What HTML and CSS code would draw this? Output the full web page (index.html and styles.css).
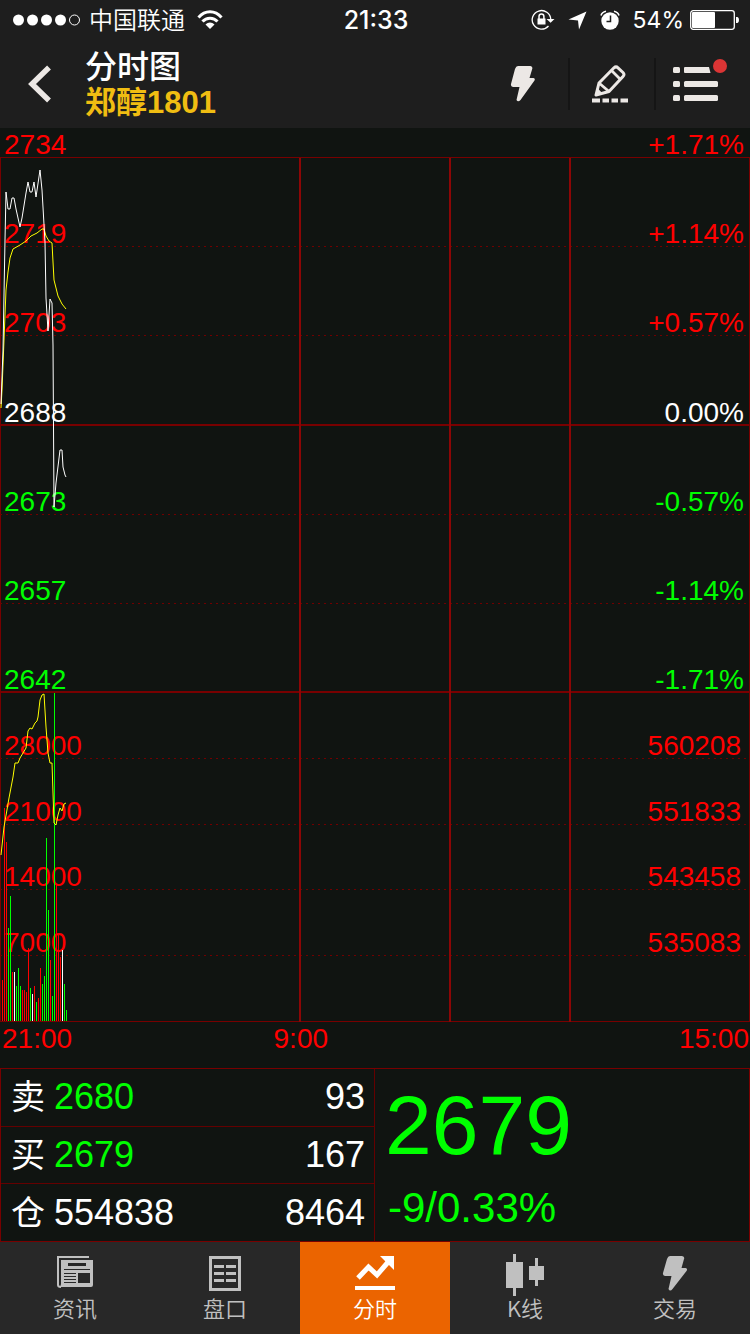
FILE: index.html
```html
<!DOCTYPE html>
<html lang="zh-CN">
<head>
  <meta charset="utf-8">
  <meta name="viewport" content="width=device-width, initial-scale=1">
  <title>分时图</title>
  <link rel="stylesheet" href="styles.css">
</head>
<body>
  <div class="app">
    <div class="status-bar">
      <div class="status-left">
        <svg width="68" height="12" viewBox="0 0 68 12" fill="#fff">
          <circle cx="5.5" cy="6" r="5.5"/><circle cx="19.5" cy="6" r="5.5"/><circle cx="33.5" cy="6" r="5.5"/><circle cx="47.5" cy="6" r="5.5"/>
          <circle cx="61.5" cy="6" r="5" fill="none" stroke="#fff"/>
        </svg>
        <span class="carrier">中国联通</span>
        <svg class="wifi" width="26" height="20" viewBox="0 0 26 20" fill="none" stroke="#fff" stroke-width="3">
          <path d="M1.500 7.500C8-.1 18-.1 24.500 7.500"/>
          <path d="M5.500 11.500C9.500 7 16.500 7 20.500 11.500"/>
          <path d="M13 19L8.500 14.500C11 11.800 15 11.800 17.500 14.500Z" fill="#fff" stroke="none"/>
        </svg>
      </div>
      <div class="clock">21:33</div>
      <div class="status-right">
        <svg width="24" height="22" viewBox="0 0 24 22" fill="none" stroke="#fff" stroke-width="1.300">
          <path d="M17.500 17A9.300 9.300 0 1 1 19.800 10.500"/>
          <path d="M15.500 10H23.500L19.600 13.800Z" fill="#fff" stroke="none"/>
          <path d="M6.500 9.500H14.500V15.500H6.500Z" fill="#fff" stroke="none"/>
          <path d="M8 10V7.500A2.400 2.400 0 0 1 12.900 7.500V10" stroke-width="1.500"/>
        </svg>
        <svg width="19" height="19" viewBox="0 0 19 19" fill="#fff"><path d="M18.500.5L11 18.500L10 9.500L.5 8.500Z"/></svg>
        <svg width="20" height="20" viewBox="0 0 20 20">
          <circle cx="10" cy="11" r="8.700" fill="#fff"/>
          <path d="M1 5.500Q2 2 6 1.200M19 5.500Q18 2 14 1.200" fill="none" stroke="#fff" stroke-width="1.600"/>
          <path d="M10.500 5.500V11.500H6.500" fill="none" stroke="#1e1e1e" stroke-width="1.500"/>
        </svg>
        <span class="battery-text">54%</span>
        <svg width="49" height="20" viewBox="0 0 49 20">
          <rect x=".7" y=".7" width="43.600" height="18.600" rx="2.500" fill="none" stroke="#fff" stroke-width="1.300"/>
          <rect x="2" y="2" width="23" height="16" rx="1" fill="#fff"/>
          <path d="M46 7H47.500Q49 7.500 49 10T47.500 13H46Z" fill="#fff"/>
        </svg>
      </div>
    </div>

    <header class="nav">
      <button class="back" aria-label="返回">
        <svg width="24" height="38" viewBox="0 0 24 38" fill="none" stroke="#ece8e5" stroke-width="5.500"><path d="M21 2.500L4 19L21 35.500"/></svg>
      </button>
      <div class="titles">
        <h1>分时图</h1>
        <div class="contract">郑醇1801</div>
      </div>
      <div class="nav-actions">
        <button class="action" aria-label="闪电下单">
          <svg width="26" height="36" viewBox="0 0 26 36" fill="#ece8e5"><path d="M8 0H20.500Q23 .5 22.200 3L19.500 12H23.500Q25.500 12.500 24.500 14.500L10.500 34Q8 36.500 6.500 34L9.500 21H3Q.5 20.500 1 18L5 3Q6 0 8 0Z"/></svg>
        </button>
        <button class="action" aria-label="画线">
          <svg width="38" height="38" viewBox="0 0 38 38" fill="none" stroke="#ece8e5" stroke-width="3" stroke-linejoin="round">
            <path d="M5 30L8 18L23 2.800Q25 1 27 2.800L32 7.500Q34 9.500 32 11.500L18 26.500Z"/>
            <path d="M8 18L18 26.500M20.500 5.500L29.500 14.500" stroke-width="2.800"/>
            <path d="M5 30L6.500 23L11.500 28.500Z" fill="#ece8e5" stroke="none"/>
            <path d="M1 35.500H9M11.500 35.500H18M20.500 35.500H27M29.500 35.500H37" stroke-width="4" stroke-linejoin="miter"/>
          </svg>
        </button>
        <button class="action" aria-label="菜单">
          <svg width="46" height="36" viewBox="0 0 46 36" fill="#ece8e5">
            <rect y="1" width="7" height="6" rx="1.500"/><path d="M12 1H36L37.500 7H12Q11 7 11 6V2Q11 1 12 1Z"/>
            <rect y="15" width="7" height="6" rx="1.500"/><rect x="11" y="15" width="34" height="6" rx="1.500"/>
            <rect y="29" width="7" height="6" rx="1.500"/><rect x="11" y="29" width="34" height="6" rx="1.500"/>
          </svg>
          <span class="badge"></span>
        </button>
      </div>
    </header>

    <main class="chart">
      <div class="row top up"><span>2734</span><span>+1.71%</span></div>

      <div class="plot price">
        <div class="row up"><span>2719</span><span>+1.14%</span></div>
        <div class="row up"><span>2703</span><span>+0.57%</span></div>
        <div class="row flat solid"><span>2688</span><span>0.00%</span></div>
        <div class="row down"><span>2673</span><span>-0.57%</span></div>
        <div class="row down"><span>2657</span><span>-1.14%</span></div>
        <div class="row down solid"><span>2642</span><span>-1.71%</span></div>
        <svg class="lines" viewBox="0 0 750 535" preserveAspectRatio="none">
          <path class="session" d="M300 0V535M450 0V535M570 0V535"/>
          <path class="avg" d="M1 250L2 232L4 182L6 132L8 114L10 100L13 91L20 87L26 83L31 78L37 75L42 71L44 71L46 78L49 83L52 85L53 104L54 122L58 138L62 146L66 151"/>
          <path class="last" d="M1 246L3 192L5 82L6 34L8 51H10L12 40H14L16 51L20 69L22 60L26 35L28 24L30 34H32L34 24L36 39L40 12L42 32L45 84L46 140L48 173L50 141L52 145L53 187L54 349L56 325L60 292H62L63 309L65 317L66 319"/>
        </svg>
      </div>

      <div class="plot volume">
        <div class="row up"><span>28000</span><span>560208</span></div>
        <div class="row up"><span>21000</span><span>551833</span></div>
        <div class="row up"><span>14000</span><span>543458</span></div>
        <div class="row up"><span>7000</span><span>535083</span></div>
        <div class="row"></div>
        <svg class="lines" viewBox="0 0 750 329" preserveAspectRatio="none">
          <path class="session" d="M300 0V329M450 0V329M570 0V329"/>
          <path class="bar-up" d="M2.500 287V328M4.500 115V328M6.500 149V328M12.500 279V328M22.500 297V328M24.500 297V328M26.500 299V328M28.500 255V328M34.500 293V328M38.500 305V328M40.500 275V328M50.500 267V328M56.500 192V328M58.500 242V328M60.500 264V328"/>
          <path class="bar-down" d="M8.500 235V328M10.500 203V328M16.500 293V328M18.500 275V328M20.500 293V328M30.500 295V328M36.500 309V328M42.500 291V328M44.500 283V328M46.500 145V328M48.500 217V328M52.500 303V328M54.500 0V328M64.500 291V328M66.500 317V328"/>
          <path class="bar-flat" d="M14.500 279V328M32.500 301V328M62.500 257V328"/>
          <path class="avg" d="M1 162L4 134L9 105L13 84L15 70H18L20 65L23 60L26 55L28 38L30 35L32 36L35 30L37 28L38 24L40 7L42 2L44 1L46 34L48 60L50 70H52L53 100L54 130L56 132L58 122L60 115L62 118L64 111L66 110"/>
        </svg>
      </div>

      <div class="times"><span>21:00</span><span>9:00</span><span>15:00</span></div>
    </main>

    <section class="quote">
      <table class="book">
        <tr><th scope="row">卖</th><td class="down">2680</td><td class="amount">93</td></tr>
        <tr><th scope="row">买</th><td class="down">2679</td><td class="amount">167</td></tr>
        <tr><th scope="row">仓</th><td>554838</td><td class="amount">8464</td></tr>
      </table>
      <div class="latest">
        <div class="latest-price">2679</div>
        <div class="latest-change">-9/0.33%</div>
      </div>
    </section>

    <nav class="tabs">
      <button class="tab">
        <svg width="36" height="36" viewBox="0 0 36 36">
          <path d="M32 1H1V29Q1 31 4 31" fill="none" stroke="#c0c0c0" stroke-width="2"/>
          <path d="M4 4H36V29Q36 31 34 31H2Q4 30 4 28Z" fill="#c0c0c0"/>
          <path d="M11 7H29V10H11ZM7 13H33V14H7ZM7 17H19V18H7ZM7 20H19V21H7ZM7 23H19V24H7ZM7 26H19V27H7ZM21 17H33V27H21Z" fill="#282828"/>
        </svg>
        <span>资讯</span>
      </button>
      <button class="tab">
        <svg width="32" height="36" viewBox="0 0 32 36" fill="none" stroke="#c0c0c0">
          <rect x="1.500" y="1.500" width="29" height="32" stroke-width="3"/>
          <path d="M5 10.500H15M17 10.500H27M5 17.500H15M17 17.500H27M5 24.500H15M17 24.500H27" stroke-width="3"/>
        </svg>
        <span>盘口</span>
      </button>
      <button class="tab active">
        <svg width="40" height="36" viewBox="0 0 40 36" fill="none" stroke="#fff">
          <path d="M3 22L13.500 11L22 19L34 5" stroke-width="5"/>
          <path d="M25 0H39V14Z" fill="#fff" stroke="none"/>
          <path d="M0 32H40" stroke-width="4"/>
        </svg>
        <span>分时</span>
      </button>
      <button class="tab">
        <svg class="candles" width="38" height="42" viewBox="0 0 38 42" fill="#c0c0c0">
          <path d="M7 0H10V8H17V34H10V42H7V34H0V8H7ZM29 4H32V12H38V26H32V32H29V26H23V12H29Z"/>
        </svg>
        <span>K线</span>
      </button>
      <button class="tab">
        <svg width="26" height="36" viewBox="0 0 26 36" fill="#c0c0c0"><path d="M8 0H20Q23 .5 22 3L19.500 12H23.500Q26 12.500 24.500 15L10.500 33Q8 36 6.500 33L9.500 20H3Q.5 19.500 1 17L5 3Q6 0 8 0Z"/></svg>
        <span>交易</span>
      </button>
    </nav>
  </div>
</body>
</html>
```
FILE: styles.css
```css
* {
  box-sizing: border-box;
}

body {
  margin: 0;
  background: #101411;
  color: #fff;
  font-family: "Liberation Sans", "Noto Sans CJK SC", sans-serif;
}

button {
  margin: 0;
  padding: 0;
  border: none;
  background: none;
  color: inherit;
  font: inherit;
  cursor: pointer;
}

svg {
  display: block;
}

.app {
  display: flex;
  flex-direction: column;
  min-height: 100vh;
}

/* status bar */
.status-bar {
  display: grid;
  grid-template-columns: 1fr auto 1fr;
  align-items: center;
  height: 40px;
  padding: 0 11px 0 13px;
  background: #1e1e1e;
  font-family: Inter, "Noto Sans CJK SC", sans-serif;
  font-size: 24px;
  line-height: 40px;
}

.status-left,
.status-right {
  display: flex;
  align-items: center;
  gap: 8px;
}

.status-right {
  justify-content: flex-end;
  gap: 13px;
}

.carrier {
  padding-top: 2px;
  font-weight: 350;
  line-height: 38px;
}

.wifi {
  margin-left: 4px;
}

.clock {
  font-size: 25px;
  font-weight: 500;
}

.battery-text {
  margin-right: -7px;
  font-size: 23px;
}

/* title bar */
.nav {
  display: flex;
  align-items: center;
  height: 88px;
  padding-right: 10px;
  background: #1e1e1e;
}

.back {
  display: flex;
  align-items: center;
  justify-content: center;
  width: 80px;
  height: 88px;
}

.titles {
  flex: 1;
  padding: 1px 0 0 5px;
  line-height: 36px;
}

.titles h1 {
  margin: 0;
  font-size: 32px;
  font-weight: 500;
}

.contract {
  color: #f0bd12;
  font-size: 31px;
  font-weight: bold;
}

.nav-actions {
  display: flex;
}

.action {
  position: relative;
  display: flex;
  align-items: center;
  justify-content: center;
  width: 86px;
  height: 52px;
  padding-right: 4px;
}

.action + .action {
  border-left: 2px solid #151515;
}

.badge {
  position: absolute;
  top: 1px;
  right: 13px;
  width: 14px;
  height: 14px;
  border-radius: 50%;
  background: #dc3535;
}

/* chart */
.chart {
  display: flex;
  flex: 1;
  flex-direction: column;
  font-size: 28px;
}

.row {
  display: flex;
  flex: 1 1 0px;
  align-items: flex-end;
  justify-content: space-between;
  padding: 0 6px 0 4px;
  line-height: 26px;
  /* dotted grid line along the bottom */
  background: repeating-linear-gradient(to right, #700000 0 2px, transparent 2px 6px) bottom / 100% 1px no-repeat;
}

.row.top {
  flex: 0 0 30px;
  background: none;
}

.row.solid {
  background: linear-gradient(#780000, #780000) bottom / 100% 2px no-repeat;
}

.up {
  color: #f00;
}

.down {
  color: #0f0;
}

.plot {
  position: relative;
  display: flex;
  flex-direction: column;
  box-shadow: inset 1px 0 #780000, inset -1px 0 #780000;
}

.price {
  flex: 535 0 0px;
  box-shadow: inset 1px 0 #780000, inset -1px 0 #780000, 0 -1px #780000;
}

.volume {
  flex: 329 0 0px;
}

.volume .row {
  padding-right: 9px;
}

.volume .row:nth-child(5) {
  background: linear-gradient(#780000, #780000) bottom / 100% 1px no-repeat;
}

.lines {
  position: absolute;
  top: 0;
  left: 0;
  width: 100%;
  height: 100%;
}

.lines path {
  fill: none;
  stroke-width: 1px;
  vector-effect: non-scaling-stroke;
}

.lines .session {
  stroke: #8c0606;
  stroke-width: 2px;
}

.lines .last {
  stroke: #fff;
}

.lines .avg {
  stroke: #ff0;
}

.lines .bar-up {
  stroke: #f00;
  shape-rendering: crispEdges;
}

.lines .bar-down {
  stroke: #0f0;
  shape-rendering: crispEdges;
}

.lines .bar-flat {
  stroke: #fff;
  shape-rendering: crispEdges;
}

.times {
  display: grid;
  grid-template-columns: 20% 40% 40%;
  height: 46px;
  padding: 0 1px 0 2px;
  color: #f00;
  line-height: 34px;
}

.times span:nth-child(2) {
  text-align: center;
}

.times span:nth-child(3) {
  text-align: right;
}

/* quote panel */
.quote {
  display: grid;
  grid-template-columns: 1fr 1fr;
  min-height: 174px;
  border: 1px solid #780000;
}

.book {
  width: 100%;
  height: 100%;
  border-collapse: collapse;
  border-right: 1px solid #640000;
  font-size: 36px;
  line-height: 56px;
}

.book tr + tr {
  border-top: 1px solid #640000;
}

.book th,
.book td {
  padding: 0;
  text-align: left;
}

.book th {
  width: 53px;
  padding-left: 10px;
  font-size: 34px;
  font-weight: normal;
}

.book .amount {
  padding-right: 9px;
  text-align: right;
}

.latest {
  padding: 14px 10px 0;
  color: #0f0;
}

.latest-price {
  font-size: 84px;
  line-height: 84px;
}

.latest-change {
  margin-bottom: -10px;
  padding-left: 3px;
  font-size: 42px;
  line-height: 82px;
}

/* bottom tabs */
.tabs {
  display: grid;
  grid-template-columns: repeat(5, 1fr);
  height: 92px;
  background: #282828;
}

.tab {
  display: flex;
  flex-direction: column;
  align-items: center;
  padding-top: 14px;
  color: #c0c0c0;
  font-family: "Noto Sans CJK SC", sans-serif;
  font-size: 22px;
  font-weight: 350;
  line-height: 30px;
}

.tab.active {
  background: #eb6400;
  color: #fff;
}

.tab .candles {
  margin: -2px 0 -4px;
}
```
